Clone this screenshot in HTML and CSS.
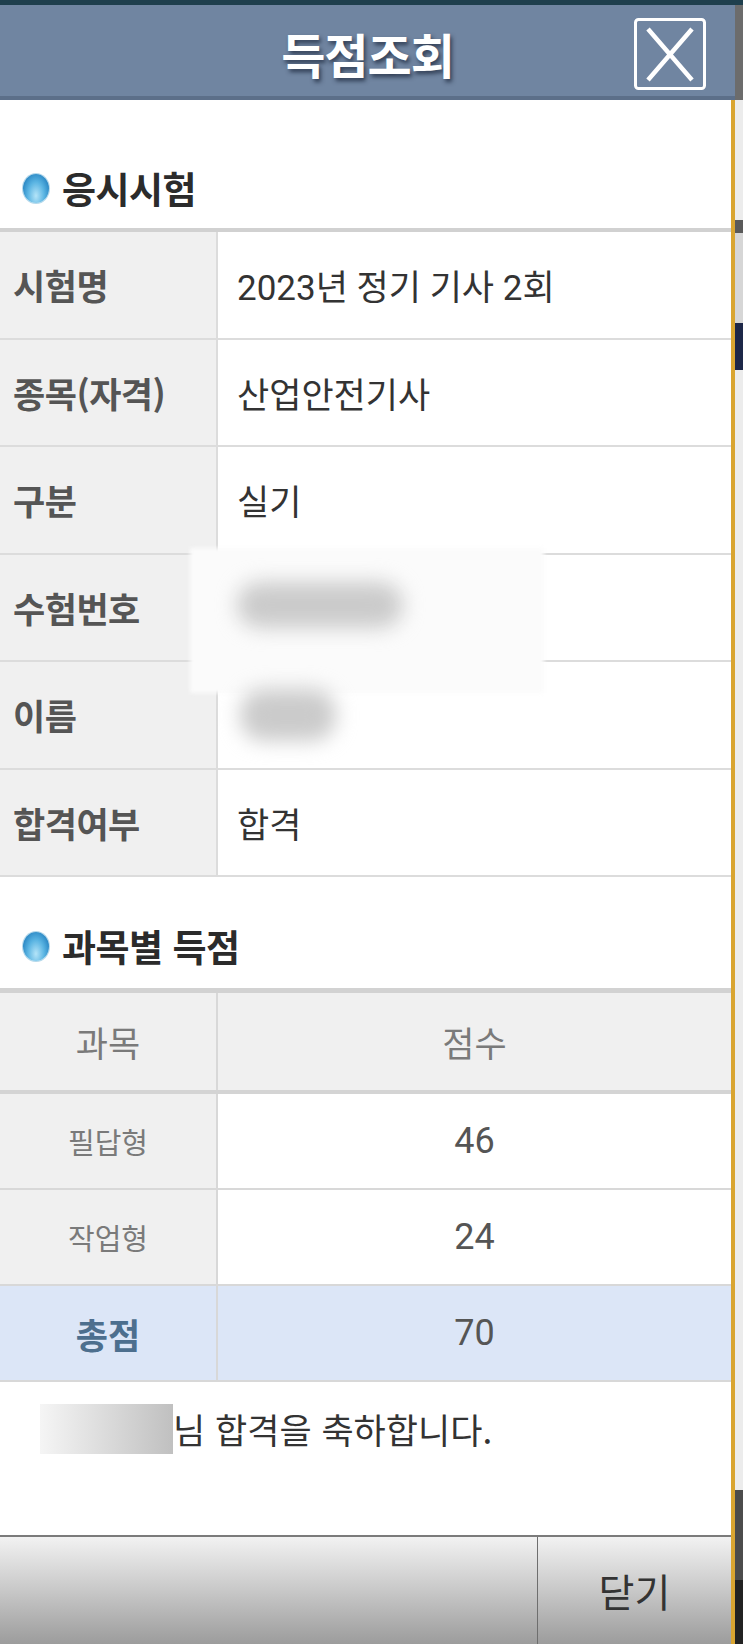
FILE: index.html
```html
<!DOCTYPE html>
<html lang="ko">
<head>
<meta charset="utf-8">
<title>득점조회</title>
<link rel="stylesheet" href="styles.css">
</head>
<body>
<div class="screen">
  <div class="topstrip"></div>
  <div class="main">
    <div class="dialog">
      <header class="dlg-head">
        <span></span>
        <h1 class="dlg-title">득점조회</h1>
        <button class="close-btn" aria-label="닫기">
          <svg width="72" height="72" viewBox="0 0 72 72">
            <rect x="1.5" y="1.5" width="69" height="69" rx="3" fill="none" stroke="#fff" stroke-width="3"/>
            <path d="M14 11 L58 62 M58 11 L14 62" stroke="#fff" stroke-width="4.5" fill="none"/>
          </svg>
        </button>
      </header>
      <div class="panel">
        <div class="dlg-body">
          <h2 class="sec-title"><span class="bullet"></span>응시시험</h2>
          <div class="info-table">
            <div class="row"><div class="th">시험명</div><div class="td">2023년 정기 기사 2회</div></div>
            <div class="row"><div class="th">종목(자격)</div><div class="td">산업안전기사</div></div>
            <div class="row"><div class="th">구분</div><div class="td">실기</div></div>
            <div class="row"><div class="th">수험번호</div><div class="td"><span class="blob blob-num"></span></div></div>
            <div class="row"><div class="th">이름</div><div class="td"><span class="blob blob-name"></span></div></div>
            <div class="row"><div class="th">합격여부</div><div class="td">합격</div></div>
            <div class="redact-patch"></div>
          </div>
          <h2 class="sec-title"><span class="bullet"></span>과목별 득점</h2>
          <div class="score-table">
            <div class="srow shead"><div class="sth">과목</div><div class="std">점수</div></div>
            <div class="srow"><div class="sth small">필답형</div><div class="std">46</div></div>
            <div class="srow"><div class="sth small">작업형</div><div class="std">24</div></div>
            <div class="srow total"><div class="sth">총점</div><div class="std">70</div></div>
          </div>
          <p class="msg"><span class="name-redact"></span>님 합격을 축하합니다.</p>
        </div>
        <footer class="dlg-foot">
          <div class="foot-space"></div>
          <button class="foot-btn">닫기</button>
        </footer>
      </div>
    </div>
    <div class="backdrop"></div>
  </div>
</div>
</body>
</html>
```
FILE: styles.css
```css
html, body {
  margin: 0;
  padding: 0;
}
body {
  width: 743px;
  height: 1644px;
  overflow: hidden;
  background: #d8d8d8;
  font-family: Roboto, "Noto Sans CJK KR", sans-serif;
}
.screen {
  width: 743px;
  height: 1644px;
  display: flex;
  flex-direction: column;
}
.topstrip {
  height: 5px;
  background: #1f3f4d;
  flex: none;
}
.main {
  flex: 1;
  display: flex;
  min-height: 0;
}
.dialog {
  width: 735px;
  flex: none;
  display: flex;
  flex-direction: column;
}
.backdrop {
  flex: 1;
  background: linear-gradient(to bottom,
    #6c6c6c 0, #6c6c6c 95px,
    #ececec 95px, #ececec 215px,
    #5a5a5a 215px, #5a5a5a 228px,
    #d6d6d6 228px, #d6d6d6 318px,
    #1d2748 318px, #1d2748 365px,
    #ececec 365px, #ececec 1485px,
    #4c4c4c 1485px, #4c4c4c 1575px,
    #222 1575px);
}
.dlg-head {
  height: 91px;
  background: #7085a1;
  border-bottom: 4px solid #5c6f89;
  display: grid;
  grid-template-columns: 1fr auto 1fr;
  align-items: center;
  flex: none;
}
.dlg-title {
  margin: 4px 0 0 0;
  color: #fff;
  font-family: "Noto Sans CJK KR", sans-serif;
  font-weight: 700;
  font-size: 48px;
  line-height: 54px;
  letter-spacing: -1px;
  text-shadow: 2px 3px 4px rgba(20, 30, 50, 0.7);
}
.close-btn {
  justify-self: end;
  margin: 6px 29px 0 0;
  padding: 0;
  border: 0;
  background: none;
  width: 72px;
  height: 72px;
  display: block;
}
.close-btn svg { display: block; }
.panel {
  flex: 1;
  display: flex;
  flex-direction: column;
  border-right: 4px solid #d9a531;
  min-height: 0;
}
.dlg-body {
  flex: 1;
  background: #fff;
  padding-top: 19px;
}
.sec-title {
  margin: 0;
  padding: 49px 0 20px 23px;
  height: 40px;
  display: flex;
  align-items: center;
  gap: 13px;
  font-family: "Noto Sans CJK KR", sans-serif;
  font-weight: 700;
  font-size: 37px;
  line-height: 40px;
  color: #2b2b2b;
  letter-spacing: -0.5px;
}
.bullet {
  width: 26px;
  height: 29px;
  border-radius: 50%;
  background: radial-gradient(ellipse at 50% 75%, #b4e4f8 0%, #5ab4e2 45%, #1f7dbd 85%, #1a6aa2 100%);
  box-shadow: 0 0 0 1px rgba(130, 190, 220, 0.6);
  flex: none;
}
.info-table {
  position: relative;
  border-top: 4px solid #d1d1d1;
}
.row {
  display: grid;
  grid-template-columns: 218px 1fr;
  height: 105.5px;
  border-bottom: 2px solid #dcdcdc;
}
.th {
  background: #f0f0f0;
  border-right: 2px solid #dcdcdc;
  display: flex;
  align-items: center;
  padding-left: 13px;
  font-family: "Noto Sans CJK KR", sans-serif;
  font-weight: 700;
  font-size: 35px;
  color: #555;
  letter-spacing: -0.5px;
}
.td {
  display: flex;
  align-items: center;
  padding-left: 19px;
  font-size: 35px;
  color: #333;
}
.blob {
  position: relative;
  z-index: 2;
  display: block;
  background: #cbcbcb;
  border-radius: 24px;
  filter: blur(10px);
}
.blob-num {
  width: 166px;
  height: 46px;
  margin-left: 0;
  margin-top: -4px;
}
.blob-name {
  width: 96px;
  height: 52px;
  margin-left: 3px;
}
.redact-patch {
  position: absolute;
  z-index: 1;
  left: 190px;
  top: 316px;
  width: 354px;
  height: 145px;
  background: #fbfbfb;
  filter: blur(2px);
}
.score-table {
  margin-top: 2px;
  border-top: 5px solid #d2d2d2;
}
.srow {
  display: grid;
  grid-template-columns: 218px 1fr;
  height: 94px;
  border-bottom: 2px solid #d8d8d8;
}
.srow.shead {
  height: 97px;
  border-bottom: 4px solid #d4d4d4;
  background: #f0f0f0;
}
.sth {
  background: #f0f0f0;
  border-right: 2px solid #d8d8d8;
  display: flex;
  align-items: center;
  justify-content: center;
  font-family: "Noto Sans CJK KR", sans-serif;
  font-size: 35px;
  color: #7a7a7a;
}
.sth.small {
  font-size: 29px;
}
.std {
  display: flex;
  align-items: center;
  justify-content: center;
  font-size: 36px;
  color: #555;
}
.shead .std {
  font-family: "Noto Sans CJK KR", sans-serif;
  font-size: 35px;
  color: #7a7a7a;
}
.srow.total {
  background: #dce6f7;
}
.srow.total .sth {
  background: #dce6f7;
  font-weight: 700;
  font-size: 35px;
  color: #4d6f8e;
}
.msg {
  margin: 0;
  padding: 22px 0 0 40px;
  display: flex;
  align-items: center;
  font-family: "Noto Sans CJK KR", sans-serif;
  font-size: 35px;
  line-height: 50px;
  color: #333;
}
.name-redact {
  width: 133px;
  height: 50px;
  background: linear-gradient(to right, #f5f5f5 0%, #d8d8d8 55%, #c0c0c0 100%);
  flex: none;
}
.dlg-foot {
  height: 107px;
  flex: none;
  border-top: 2px solid #7b7b7b;
  display: flex;
  background: linear-gradient(to bottom, #f2f2f2 0%, #c8c8c8 50%, #9c9c9c 100%);
}
.foot-space {
  width: 537px;
  border-right: 1px solid #6e6e6e;
}
.foot-btn {
  flex: 1;
  border: 0;
  background: none;
  padding: 0 0 2px 0;
  font-family: "Noto Sans CJK KR", sans-serif;
  font-size: 39px;
  color: #333;
}
```
